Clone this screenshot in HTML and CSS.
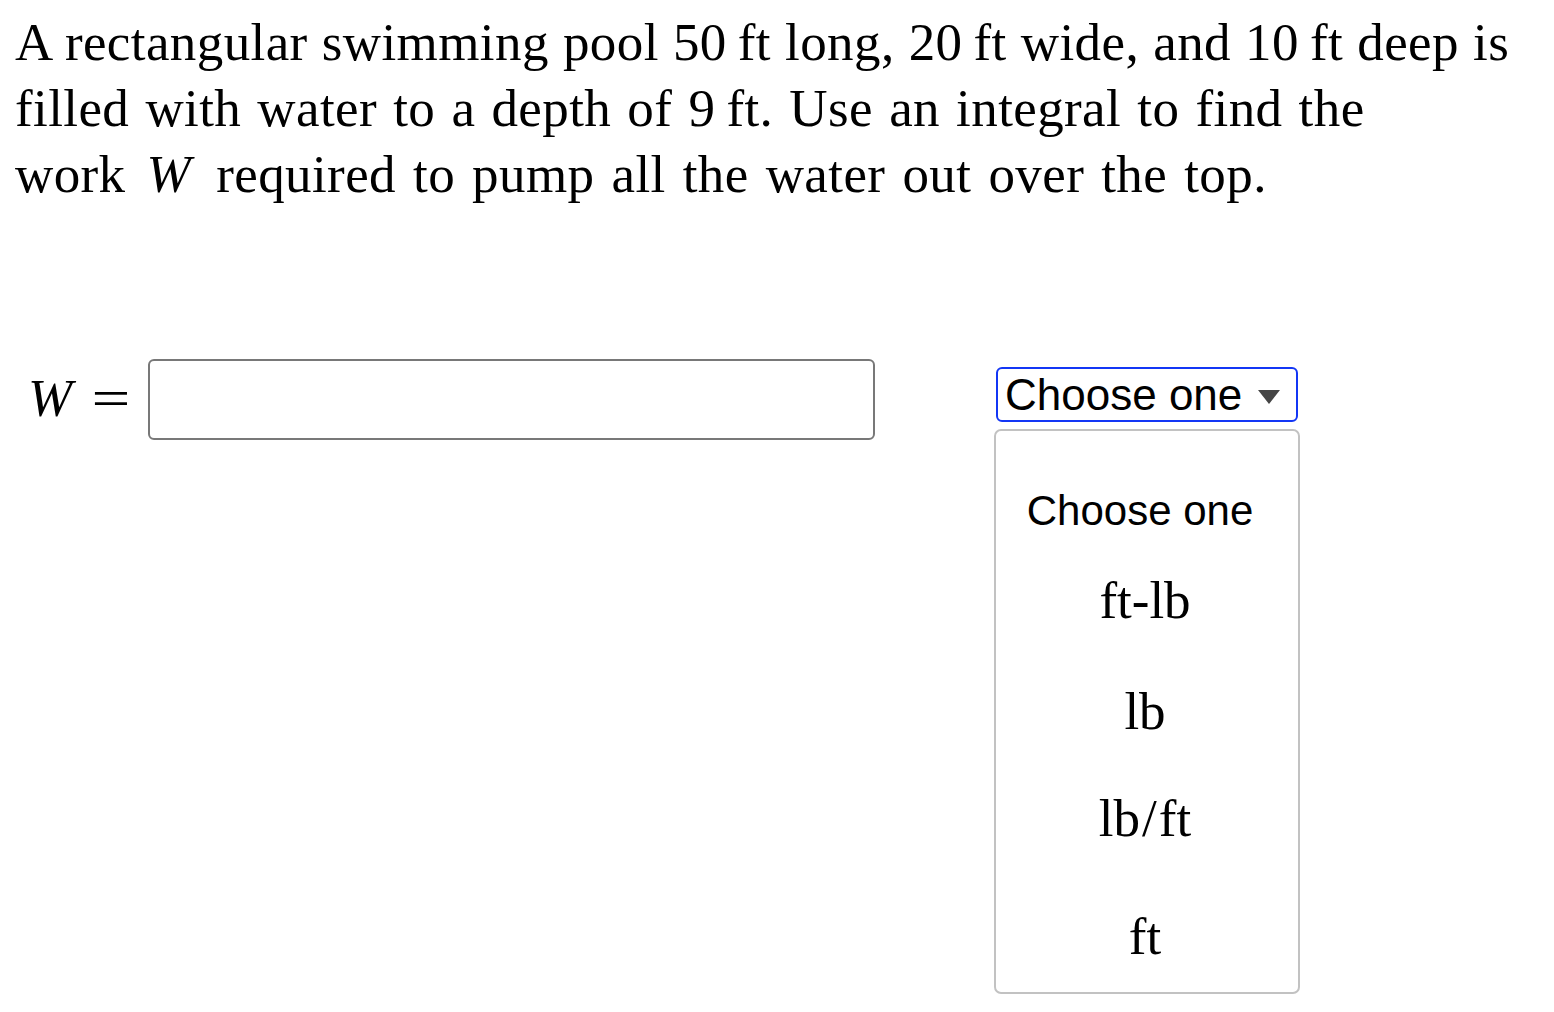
FILE: index.html
```html
<!DOCTYPE html>
<html>
<head>
<meta charset="utf-8">
<link rel="stylesheet" href="styles.css">
</head>
<body>
<div class="page">
  <p class="question"><span class="line l1">A rectangular swimming pool 50&thinsp;ft long, 20&thinsp;ft wide, and 10&thinsp;ft deep is</span><span class="line l2">filled with water to a depth of 9&thinsp;ft. Use an integral to find the</span><span class="line l3">work <i class="var var-inline">W</i> required to pump all the water out over the top.</span></p>
  <div class="answer-row">
    <div class="math-label"><i class="var">W</i><span class="eq">=</span></div>
    <div class="answer-input"></div>
    <div class="unit-picker">
      <div class="select">
        <span class="select-text">Choose one</span>
        <svg class="caret" width="24" height="16" viewBox="0 0 24 16"><polygon points="1,1 23,1 12,15" fill="#454545"/></svg>
      </div>
      <ul class="dropdown">
        <li class="opt opt-plain">Choose one</li>
        <li class="opt opt-1">ft-lb</li>
        <li class="opt opt-2">lb</li>
        <li class="opt opt-3">lb<span class="slash">/</span>ft</li>
        <li class="opt opt-4">ft</li>
      </ul>
    </div>
  </div>
</div>
</body>
</html>
```
FILE: styles.css
```css
html, body {
  margin: 0;
  padding: 0;
  background: #ffffff;
}
.page {
  padding: 0 0 0 15px;
  font-family: "Liberation Serif", "Times New Roman", serif;
  color: #000;
}
.question {
  margin: 0;
  padding-top: 9px;
  font-size: 53px;
  line-height: 66px;
  white-space: nowrap;
}
.line {
  display: block;
  letter-spacing: 0.4px;
}
.l1 { word-spacing: 0.5px; }
.l2 { word-spacing: 2.5px; }
.l3 { word-spacing: 3.4px; }
.var {
  font-style: italic;
}
.var-inline {
  margin: 0 8px 0 4px;
}
.answer-row {
  display: flex;
  align-items: flex-start;
  margin-top: 152px;
}
.math-label {
  width: 133px;
  padding-left: 13px;
  box-sizing: border-box;
  font-size: 53px;
  line-height: 78px;
  display: flex;
  gap: 24px;
}
.eq {
  font-style: normal;
  display: inline-block;
  transform: scaleX(1.3);
}
.answer-input {
  width: 727px;
  height: 81px;
  box-sizing: border-box;
  border: 2px solid #787878;
  border-radius: 6px;
}
.unit-picker {
  margin-left: 119px;
  display: flex;
  flex-direction: column;
  align-items: center;
  width: 306px;
  margin-top: 8px;
}
.select {
  width: 302px;
  height: 55px;
  box-sizing: border-box;
  border: 2px solid #1336f5;
  border-radius: 6px;
  display: flex;
  align-items: center;
  justify-content: space-between;
  padding: 0 15px 0 7px;
  font-family: "Liberation Sans", Arial, sans-serif;
  font-size: 44px;
}
.caret {
  margin-top: 4px;
}
.dropdown {
  list-style: none;
  margin: 7px 0 0 0;
  padding: 0;
  width: 306px;
  height: 565px;
  box-sizing: border-box;
  border: 2px solid #c2c2c2;
  border-radius: 7px;
}
.opt {
  text-align: center;
  font-size: 53px;
  padding-right: 4px;
}
.slash {
  margin: 0 2px;
}
.opt-plain {
  font-family: "Liberation Sans", Arial, sans-serif;
  font-size: 42px;
  padding-right: 14px;
  margin-top: 50px;
  line-height: 60px;
}
.opt-1 { margin-top: 24px; line-height: 70px; }
.opt-2 { margin-top: 41px; line-height: 70px; }
.opt-3 { margin-top: 37px; line-height: 70px; }
.opt-4 { margin-top: 48px; line-height: 70px; }
```
